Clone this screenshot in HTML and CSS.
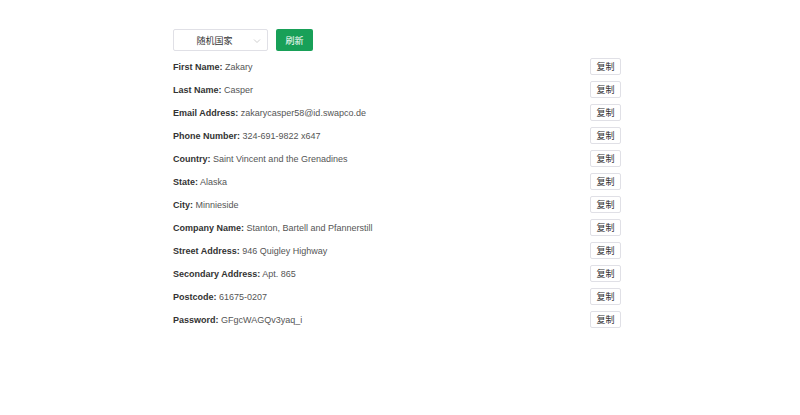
FILE: index.html
```html
<!DOCTYPE html>
<html>
<head>
<meta charset="utf-8">
<link rel="stylesheet" href="styles.css">
</head>
<body>
<div class="wrap">
  <div class="toolbar">
    <div class="select"><span class="select-text">随机国家</span>
      <svg class="arrow" width="8" height="8" viewBox="0 0 8 8"><path d="M1 2.5 L4 5.5 L7 2.5" fill="none" stroke="#c2c2c2" stroke-width="0.8"/></svg>
    </div>
    <button class="btn-primary">刷新</button>
  </div>
  <div class="list">
    <div class="row"><span><b>First Name:</b> Zakary</span><button class="copy">复制</button></div>
    <div class="row"><span><b>Last Name:</b> Casper</span><button class="copy">复制</button></div>
    <div class="row"><span><b>Email Address:</b> zakarycasper58@id.swapco.de</span><button class="copy">复制</button></div>
    <div class="row"><span><b>Phone Number:</b> 324-691-9822 x647</span><button class="copy">复制</button></div>
    <div class="row"><span><b>Country:</b> Saint Vincent and the Grenadines</span><button class="copy">复制</button></div>
    <div class="row"><span><b>State:</b> Alaska</span><button class="copy">复制</button></div>
    <div class="row"><span><b>City:</b> Minnieside</span><button class="copy">复制</button></div>
    <div class="row"><span><b>Company Name:</b> Stanton, Bartell and Pfannerstill</span><button class="copy">复制</button></div>
    <div class="row"><span><b>Street Address:</b> 946 Quigley Highway</span><button class="copy">复制</button></div>
    <div class="row"><span><b>Secondary Address:</b> Apt. 865</span><button class="copy">复制</button></div>
    <div class="row"><span><b>Postcode:</b> 61675-0207</span><button class="copy">复制</button></div>
    <div class="row"><span><b>Password:</b> GFgcWAGQv3yaq_i</span><button class="copy">复制</button></div>
  </div>
</div>
</body>
</html>
```

FILE: styles.css
```css
html, body { margin: 0; padding: 0; background: #fff; }
body { font-family: "Liberation Sans", Arial, "Noto Sans CJK SC", sans-serif; color: #333; font-size: 9px; }
.wrap { width: 454px; box-sizing: border-box; margin: 0 auto; padding: 29px 6px 0 0; }
.toolbar { display: flex; align-items: center; gap: 8px; height: 22px; margin-bottom: 4px; }
.select { width: 95px; height: 22px; box-sizing: border-box; border: 1px solid #e0e0e6; border-radius: 2px; display: flex; align-items: center; position: relative; }
.select-text { flex: 1; text-align: center; font-family: "Noto Sans CJK SC", sans-serif; font-size: 9px; color: #333; padding-right: 12px; }
.arrow { position: absolute; right: 6px; top: 7px; }
.btn-primary { width: 37px; height: 22px; border: none; border-radius: 2px; background: #18a058; color: #fff; font-family: "Noto Sans CJK SC", sans-serif; font-size: 9px; padding: 0; }
.list { display: flex; flex-direction: column; }
.row { height: 23px; display: flex; align-items: center; justify-content: space-between; }
.row b { font-weight: bold; color: #333; }
.row span { color: #555; }
.copy { width: 31px; height: 17px; box-sizing: border-box; border: 1px solid #e0e0e6; border-radius: 2px; background: #fff; font-family: "Noto Sans CJK SC", sans-serif; font-size: 9px; color: #333; padding: 0; }
```
